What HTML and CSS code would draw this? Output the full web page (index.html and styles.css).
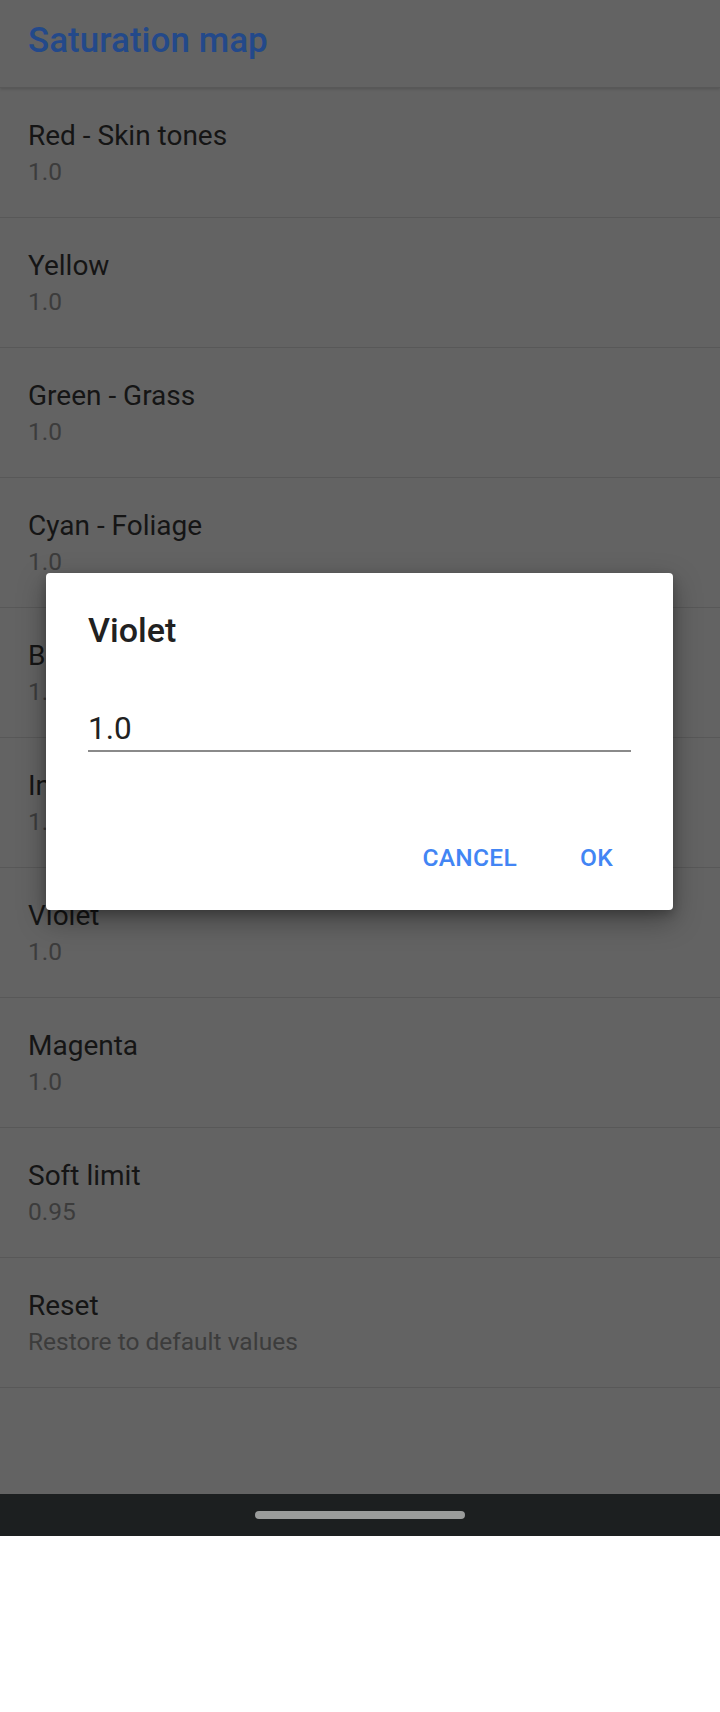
FILE: index.html
```html
<!DOCTYPE html>
<html lang="en">
<head>
<meta charset="utf-8">
<title>Saturation map</title>
<link rel="stylesheet" href="styles.css">
</head>
<body>
<div class="screen">
  <div class="app">
    <header class="header">
      <h1 class="header-title">Saturation map</h1>
    </header>
    <ul class="prefs">
      <li class="pref"><span class="pref-title">Red - Skin tones</span><span class="pref-summary">1.0</span></li>
      <li class="pref"><span class="pref-title">Yellow</span><span class="pref-summary">1.0</span></li>
      <li class="pref"><span class="pref-title">Green - Grass</span><span class="pref-summary">1.0</span></li>
      <li class="pref"><span class="pref-title">Cyan - Foliage</span><span class="pref-summary">1.0</span></li>
      <li class="pref"><span class="pref-title">Blue - Sky</span><span class="pref-summary">1.0</span></li>
      <li class="pref"><span class="pref-title">Indigo</span><span class="pref-summary">1.0</span></li>
      <li class="pref"><span class="pref-title">Violet</span><span class="pref-summary">1.0</span></li>
      <li class="pref"><span class="pref-title">Magenta</span><span class="pref-summary">1.0</span></li>
      <li class="pref"><span class="pref-title">Soft limit</span><span class="pref-summary">0.95</span></li>
      <li class="pref"><span class="pref-title">Reset</span><span class="pref-summary">Restore to default values</span></li>
    </ul>

    <div class="dialog" role="dialog">
      <h2 class="dialog-title">Violet</h2>
      <div class="dialog-input">1.0</div>
      <div class="dialog-actions">
        <button class="dialog-btn">CANCEL</button>
        <button class="dialog-btn">OK</button>
      </div>
    </div>
  </div>
  <nav class="navbar"><span class="nav-pill"></span></nav>
</div>
</body>
</html>
```

FILE: styles.css
```css
* { box-sizing: border-box; }

html, body {
  margin: 0;
  padding: 0;
  background: #ffffff;
}

body {
  font-family: Roboto, "Noto Sans", "Liberation Sans", sans-serif;
  width: 720px;
  height: 1712px;
}

.screen {
  width: 720px;
  display: flex;
  flex-direction: column;
}

.app {
  position: relative;
  height: 1494px;
  background: #636363;
}

.header {
  height: 88px;
  padding: 0 28px;
  border-bottom: 1px solid #585858;
  box-shadow: 0 1px 3px rgba(0, 0, 0, 0.18);
  position: relative;
}

.header-title {
  margin: 0;
  font-family: "Roboto Medium", Roboto, "Noto Sans", sans-serif;
  font-size: 35px;
  font-weight: 500;
  color: #23498a;
  line-height: 41px;
  padding-top: 20px;
}

.prefs {
  list-style: none;
  margin: 0;
  padding: 0;
}

.pref {
  height: 130px;
  padding: 30px 28px 0;
  border-bottom: 1px solid #585858;
  display: flex;
  flex-direction: column;
}

.pref-title {
  font-size: 28px;
  line-height: 36px;
  color: #151515;
}

.pref-summary {
  font-size: 24.5px;
  line-height: 36px;
  color: #3c3c3c;
}

.dialog {
  position: absolute;
  left: 46px;
  top: 573px;
  width: 627px;
  height: 337px;
  background: #ffffff;
  border-radius: 4px;
  box-shadow: 0 10px 28px rgba(0, 0, 0, 0.35), 0 4px 10px rgba(0, 0, 0, 0.2);
  padding: 37px 42px 0 42px;
  display: flex;
  flex-direction: column;
}

.dialog-title {
  margin: 0;
  font-family: "Roboto Medium", Roboto, "Noto Sans", sans-serif;
  font-size: 34px;
  font-weight: 500;
  line-height: 40px;
  color: #212121;
}

.dialog-input {
  margin-top: 60px;
  width: 543px;
  font-size: 31.5px;
  line-height: 37px;
  color: #212121;
  padding-bottom: 3px;
  border-bottom: 2px solid #8a8a8a;
}

.dialog-actions {
  margin-top: auto;
  margin-bottom: 37px;
  margin-right: 18px;
  display: flex;
  justify-content: flex-end;
  gap: 63px;
}

.dialog-btn {
  border: 0;
  background: transparent;
  padding: 0;
  font-family: "Roboto Medium", Roboto, "Noto Sans", sans-serif;
  font-size: 24.5px;
  font-weight: 500;
  line-height: 30px;
  letter-spacing: 0.3px;
  color: #4285f4;
}

.navbar {
  height: 42px;
  background: #1c1f20;
  display: flex;
  align-items: center;
  justify-content: center;
}

.nav-pill {
  width: 210px;
  height: 8px;
  border-radius: 4px;
  background: #9a9c9b;
}
```
